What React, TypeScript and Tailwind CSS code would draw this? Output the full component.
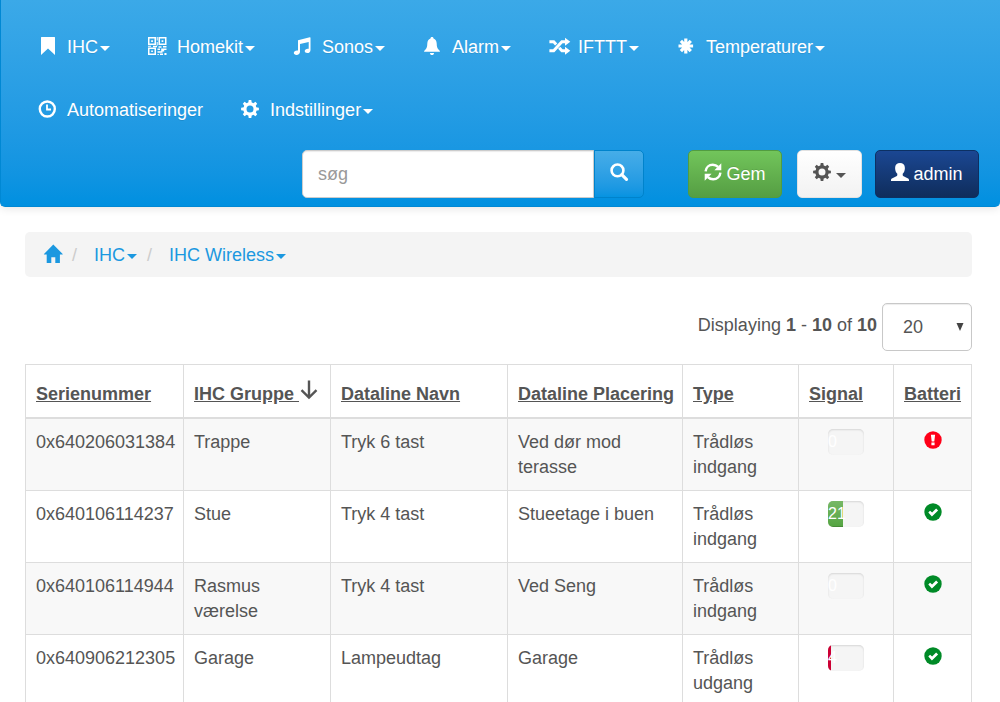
import { useState } from 'react';
import type { ReactNode } from 'react';
import clsx from 'clsx';

type IconProps = { className?: string };

const Glyph = ({ className, children }: { className?: string; children: ReactNode }) => (
  <svg
    viewBox="0 0 18 18"
    fill="currentColor"
    aria-hidden="true"
    className={clsx('h-[18px] w-[18px] shrink-0 overflow-visible', className)}
  >
    {children}
  </svg>
);

const BookmarkIcon = () => (
  <Glyph>
    <path d="M3 .5Q3 0 3.5 0h13q.5 0 .5.5V18l-7-6.6L3 18z" />
  </Glyph>
);

const QrIcon = () => (
  <Glyph>
    <path
      fillRule="evenodd"
      d="M0 0h8v8H0zM1.500 1.500v5h5v-5zM10.500 0H18.500V8h-8zM12 1.500v5h5v-5zM0 10.500h8V18H0zM1.500 12v4.500h5V12z"
    />
    <path d="M3.200 3.200h1.700v1.700H3.200zM13.600 3.200h1.700v1.700h-1.700zM3.200 13.400h1.700v1.700H3.200zM8.700 0h1v3.500h-1zM8.700 5h1v3.500h-1zM0 8.700h3v1H0zM5 8.700h4v1.600H5zM10.500 9.200h3v1.500h-3zM15 9h3.500v1.500H15zM9.500 11.500h2.500V13H9.500zM13.200 11.500h5.300v1.600h-2.300v1.500h-3zM9.500 14.300h5v1.500h-5zM12 16.400h3V18h-3zM16.400 16h2.100v2h-2.100zM9.500 17h1.300v1H9.500z" />
  </Glyph>
);

const MusicIcon = () => (
  <Glyph>
    <path d="M5 3.200 16.800.2q.7-.1.700.6V13c0 2-1.300 3.100-3.200 3.100-1.600 0-2.600-.8-2.600-2 0-1.700 1.900-2.700 4-2.300V4.900L7 7.100v7.600c0 2-1.500 3.200-3.500 3.200-1.600 0-2.700-.8-2.700-2.100 0-1.800 2-2.700 4.200-2.300z" />
  </Glyph>
);

const BellIcon = () => (
  <Glyph>
    <path d="M9 0c1 0 1.600.7 1.500 1.600 2 .7 3.100 2.400 3.200 4.800.1 3.300.6 4.800 1.800 6.200.7.800 1.300 1.200 1.500 2.200H1c.2-1 .8-1.400 1.500-2.200 1.200-1.400 1.700-2.900 1.800-6.200.1-2.400 1.200-4.100 3.200-4.800C7.400.7 8 0 9 0zM7 15.900h4c0 1.300-.8 2.100-2 2.100s-2-.8-2-2.100z" />
  </Glyph>
);

const ShuffleIcon = () => (
  <Glyph>
    <path d="M.4 4.700h4.300l2.500 2.700M.4 13.700h4.300l8.200-9h3.600M10.200 10.800l2.700 2.900h3.600" fill="none" stroke="currentColor" strokeWidth="3" />
    <path d="M16 .7l5.300 4-5.300 4zM16 9.700l5.300 4-5.300 4z" />
  </Glyph>
);

const AsteriskIcon = () => (
  <Glyph>
    <path
      d="M8.800 1.500v15M1.500 9h14.600M3.900 3.900l9.900 10.200M13.800 3.900 3.900 14.100"
      fill="none"
      stroke="currentColor"
      strokeWidth="3.200"
    />
  </Glyph>
);

const ClockIcon = () => (
  <Glyph>
    <circle cx="9.300" cy="9" r="7.500" fill="none" stroke="currentColor" strokeWidth="2.400" />
    <path d="M9 4.500v5h4" fill="none" stroke="currentColor" strokeWidth="1.800" />
  </Glyph>
);

const TEETH = [0, 45, 90, 135, 180, 225, 270, 315];

const GearIcon = ({ className }: IconProps) => (
  <Glyph className={className}>
    <circle cx="9" cy="9" r="5.100" fill="none" stroke="currentColor" strokeWidth="3.200" />
    {TEETH.map((angle) => (
      <path key={angle} d="M7.200 3.300 7.700.1h2.600l.5 3.200z" transform={`rotate(${angle} 9 9)`} />
    ))}
  </Glyph>
);

const SearchIcon = () => (
  <Glyph>
    <circle cx="7.500" cy="7.400" r="5.900" fill="none" stroke="currentColor" strokeWidth="2.600" />
    <path d="M11.800 11.700l4.700 4.600" stroke="currentColor" strokeWidth="3.200" strokeLinecap="round" />
  </Glyph>
);

const RefreshIcon = () => (
  <Glyph>
    <path
      d="M1.600 8.300C2 4.500 5 1.700 8.800 1.700c2.100 0 3.900.8 5.300 2.200M16.400 9.700c-.4 3.800-3.400 6.600-7.200 6.600-2.100 0-3.900-.8-5.300-2.200"
      fill="none"
      stroke="currentColor"
      strokeWidth="2.500"
    />
    <path d="M17.300.3v6.900h-6.900zM.7 17.700v-6.900h6.900z" />
  </Glyph>
);

const UserIcon = () => (
  <Glyph>
    <path d="M9 0c2.900 0 4.900 1.900 4.900 4.900 0 2.600-.9 4.600-2.200 5.900v1.300c0 .6.3.9.9 1.200l4 1.900c.9.4 1.400.9 1.400 1.700V18H0v-1.100c0-.8.5-1.300 1.400-1.700l4-1.900c.6-.3.9-.6.9-1.200v-1.300C5 9.500 4.100 7.500 4.100 4.900 4.100 1.900 6.100 0 9 0z" />
  </Glyph>
);

const HomeIcon = () => (
  <Glyph>
    <path d="M9.300-.4 18.700 9q.2.500-.3.500h-2.500V18h-4.600v-5.700H7.300V18H2.700V9.500H.2Q-.3 9.500 0 9z" />
  </Glyph>
);

const SortArrow = () => (
  <Glyph className="mb-2 ml-px">
    <path d="M9-.5v17M1.500 9.200 9 16.500l7.500-7.300" fill="none" stroke="currentColor" strokeWidth="2.400" />
  </Glyph>
);

const OkSign = () => (
  <Glyph className="mx-auto text-[#008a27]">
    <circle cx="9" cy="9" r="8.700" />
    <path d="M4.300 9.600l1.800-1.800 2 1.700 4-4 2 2-6.200 6.100z" fill="white" />
  </Glyph>
);

const AlertSign = () => (
  <Glyph className="mx-auto text-[#ff0018]">
    <circle cx="9" cy="9" r="8.700" />
    <path d="M6.900 3.700h4.200l-.8 6.800H7.700zM7.400 11.500h3.200v2.800H7.400z" fill="white" />
  </Glyph>
);

const Caret = ({ className }: IconProps) => (
  <svg viewBox="0 0 10 5" fill="currentColor" aria-hidden="true" className={clsx('h-[5px] w-[10px] shrink-0', className)}>
    <path d="M0 0h10L5 5z" />
  </svg>
);

const navItems = [
  { label: 'IHC', icon: <BookmarkIcon />, menu: true },
  { label: 'Homekit', icon: <QrIcon />, menu: true },
  { label: 'Sonos', icon: <MusicIcon />, menu: true },
  { label: 'Alarm', icon: <BellIcon />, menu: true },
  { label: 'IFTTT', icon: <ShuffleIcon />, menu: true },
  { label: 'Temperaturer', icon: <AsteriskIcon />, menu: true },
  { label: 'Automatiseringer', icon: <ClockIcon />, menu: false },
  { label: 'Indstillinger', icon: <GearIcon />, menu: true },
];

const columns = [
  { label: 'Serienummer', width: 'w-[158px]' },
  { label: 'IHC Gruppe ', width: 'w-[147px]', sorted: true },
  { label: 'Dataline Navn', width: 'w-[177px]' },
  { label: 'Dataline Placering', width: 'w-[175px]' },
  { label: 'Type', width: 'w-[116px]' },
  { label: 'Signal', width: 'w-[95px]' },
  { label: 'Batteri', width: 'w-auto' },
];

const devices = [
  { serial: '0x640206031384', group: 'Trappe', name: 'Tryk 6 tast', place: 'Ved dør mod terasse', type: 'Trådløs indgang', signal: 0, ok: false },
  { serial: '0x640106114237', group: 'Stue', name: 'Tryk 4 tast', place: 'Stueetage i buen', type: 'Trådløs indgang', signal: 21, ok: true },
  { serial: '0x640106114944', group: 'Rasmus værelse', name: 'Tryk 4 tast', place: 'Ved Seng', type: 'Trådløs indgang', signal: 0, ok: true },
  { serial: '0x640906212305', group: 'Garage', name: 'Lampeudtag', place: 'Garage', type: 'Trådløs udgang', signal: 4, ok: true },
];

const cell = 'border border-[#dddddd] pt-[11px] pr-1 pb-[10px] pl-[10px] align-top leading-[25px]';

const SignalBar = ({ value }: { value: number }) => (
  <div className="mx-auto h-[26px] w-9 overflow-hidden rounded-[5px] bg-[#f5f5f5] shadow-[inset_0_1px_2px_rgba(0,0,0,0.13)]">
    <div
      className={clsx(
        'h-full text-[16px] leading-[26px] text-white shadow-[inset_0_-1px_0_rgba(0,0,0,0.15)]',
        value > 10 ? 'bg-linear-to-b from-[#77b865] to-[#54a441]' : 'bg-[#cc0033]'
      )}
      style={{ width: `${value * 2}%` }}
    >
      {value}
    </div>
  </div>
);

const TopBar = () => (
  <header className="rounded-b-[5px] border-b border-l border-[#0088d4] bg-linear-to-b from-[#3ba9e8] to-[#0090e0] pt-[15px] pr-[21px] pb-2 pl-[37px] text-white shadow-[0_1px_10px_rgba(0,0,0,0.12)]">
    <nav>
      <ul className="flex flex-wrap gap-x-[38px]">
        {navItems.map((item) => (
          <li key={item.label}>
            <a href="#" className="flex h-[63px] items-center text-shadow-[0_1px_0_rgba(0,0,0,0.1)]">
              <span className="mr-[11px] mb-0.5">{item.icon}</span>
              {item.label}
              {item.menu && <Caret className="mt-1 ml-0.5" />}
            </a>
          </li>
        ))}
      </ul>
    </nav>

    <div className="mt-[9px] flex h-12 justify-end">
      <form className="mr-11 flex" onSubmit={(e) => e.preventDefault()}>
        <input
          type="search"
          aria-label="søg"
          placeholder="søg"
          className="w-[292px] rounded-l-[5px] border border-[#cccccc] bg-white px-[15px] text-[#555555] shadow-[inset_0_1px_1px_rgba(0,0,0,0.08)] placeholder:text-[#999999]"
        />
        <button
          type="submit"
          aria-label="Search"
          className="flex w-[50px] justify-center rounded-r-[5px] border border-[#0083cc] bg-linear-to-b from-[#46ade8] to-[#0593e1] pt-3"
        >
          <SearchIcon />
        </button>
      </form>
      <button
        type="button"
        className="flex w-[94px] items-center justify-center gap-1 rounded-[5px] border border-[#529c40] bg-linear-to-b from-[#72c55b] to-[#559e43] text-shadow-[0_-1px_0_rgba(0,0,0,0.1)]"
      >
        <span className="mb-1"><RefreshIcon /></span>
        Gem
      </button>
      <button
        type="button"
        aria-label="Options"
        className="ml-[15px] flex w-[65px] items-center justify-center gap-[5px] rounded-[5px] border border-[#e2e2e2] bg-linear-to-b from-white to-[#f2f2f2] text-[#555555]"
      >
        <GearIcon className="mb-1" />
        <Caret className="mt-0.5" />
      </button>
      <button
        type="button"
        className="ml-[13px] flex w-[104px] items-center justify-center gap-1 rounded-[5px] border border-[#0c3063] bg-linear-to-b from-[#1b4793] to-[#0f2d5c]"
      >
        <span className="mb-1"><UserIcon /></span>
        admin
      </button>
    </div>
  </header>
);

const Breadcrumb = () => (
  <nav aria-label="breadcrumb" className="flex h-[45px] items-center rounded-[5px] bg-[#f4f4f4] pl-[19px] text-[#1b98e0]">
    <a href="#" aria-label="Home" className="mb-0.5">
      <HomeIcon />
    </a>
    <span className="ml-[10px] text-[#cccccc]">/</span>
    <a href="#" className="ml-[17px] flex items-center">
      IHC
      <Caret className="mt-1 ml-0.5" />
    </a>
    <span className="ml-[10px] text-[#cccccc]">/</span>
    <a href="#" className="ml-[17px] flex items-center">
      IHC Wireless
      <Caret className="mt-1 ml-0.5" />
    </a>
  </nav>
);

export default function App() {
  const [pageSize, setPageSize] = useState('20');

  return (
    <div className="bg-white font-['Liberation_Sans',Arial,sans-serif] text-[18px] leading-[26px] text-[#555555]">
      <TopBar />

      <main className="pt-[25px] pr-7 pl-[25px]">
        <Breadcrumb />

        <div className="mt-[26px] flex items-center justify-end gap-[5px]">
          <label htmlFor="page-size" className="mb-1">
            Displaying <b>1</b> - <b>10</b> of <b>10</b>
          </label>
          <div className="relative">
            <select
              id="page-size"
              value={pageSize}
              onChange={(e) => setPageSize(e.target.value)}
              className="h-12 w-[90px] appearance-none rounded-[5px] border border-[#c8c8c8] bg-white pl-5 shadow-[inset_0_1px_1px_rgba(0,0,0,0.075)]"
            >
              <option>10</option>
              <option>20</option>
              <option>50</option>
            </select>
            <svg viewBox="0 0 8 8" aria-hidden="true" className="pointer-events-none absolute top-5 right-2 h-2 w-2 fill-[#444444]">
              <path d="M.5 0h7L4 8z" />
            </svg>
          </div>
        </div>

        <table className="mt-[13px] w-full table-fixed border-collapse">
          <thead>
            <tr className="h-[53px]">
              {columns.map((col) => (
                <th
                  key={col.label}
                  className={clsx('border border-b-2 border-[#dddddd] pt-[7px] pl-[10px] text-left', col.width)}
                >
                  <a href="#" className="flex h-[26px] items-center whitespace-pre underline">
                    {col.label}
                    {col.sorted && <SortArrow />}
                  </a>
                </th>
              ))}
            </tr>
          </thead>
          <tbody>
            {devices.map((d) => (
              <tr key={d.serial} className="odd:bg-[#f8f8f8]">
                <td className={cell}>{d.serial}</td>
                <td className={cell}>{d.group}</td>
                <td className={cell}>{d.name}</td>
                <td className={cell}>{d.place}</td>
                <td className={cell}>{d.type}</td>
                <td className="border border-[#dddddd] pt-[10px] align-top">
                  <SignalBar value={d.signal} />
                </td>
                <td className="border border-[#dddddd] pt-3 align-top">{d.ok ? <OkSign /> : <AlertSign />}</td>
              </tr>
            ))}
          </tbody>
        </table>
      </main>
    </div>
  );
}
